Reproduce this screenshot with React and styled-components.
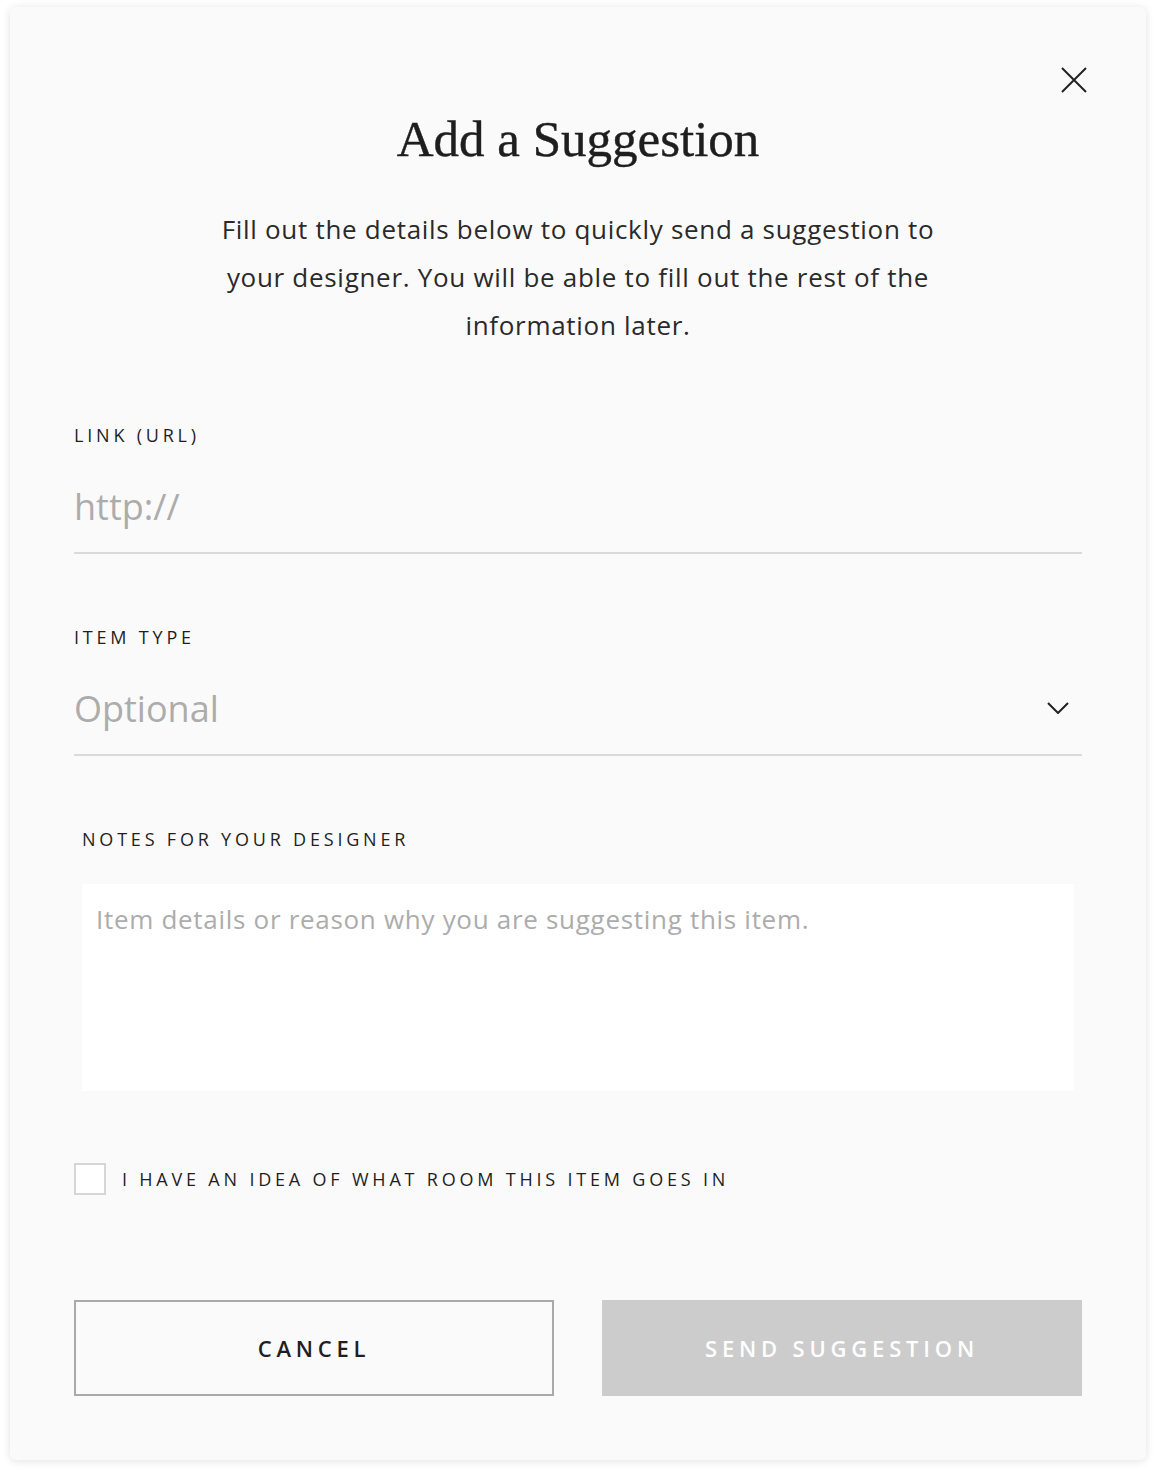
import React, { useState } from 'react';
import styled, { createGlobalStyle } from 'styled-components';

const Global = createGlobalStyle`
  html, body {
    margin: 0;
    padding: 0;
    background: #ffffff;
  }
  * { box-sizing: border-box; }
`;

const Page = styled.div`
  padding: 7px 10px 12px 10px;
`;

const Modal = styled.div`
  position: relative;
  width: 1136px;
  height: 1453px;
  background: #fafafa;
  border-radius: 6px;
  box-shadow: 0 1px 8px rgba(0, 0, 0, 0.12);
  padding: 107px 64px 0 64px;
  font-family: "Open Sans", "Noto Sans", sans-serif;
  color: #222;
`;

const Close = styled.button`
  all: unset;
  position: absolute;
  top: 53px;
  right: 52px;
  width: 40px;
  height: 40px;
  display: flex;
  align-items: center;
  justify-content: center;
  cursor: pointer;
`;

const Title = styled.h1`
  margin: 0;
  text-align: center;
  font-family: "Liberation Serif", "DejaVu Serif", serif;
  font-weight: 400;
  font-size: 51px;
  line-height: 1;
  color: #1e1e1e;
  -webkit-text-stroke: 0.4px #1e1e1e;
`;

const Intro = styled.p`
  margin: 40px auto 0 auto;
  width: 730px;
  text-align: center;
  font-size: 26px;
  letter-spacing: 0.7px;
  line-height: 48px;
  color: #2a2a2a;
`;

const Field = styled.div`
  margin-top: ${p => p.$top}px;
`;

const Label = styled.div`
  font-size: 18px;
  font-weight: 500;
  letter-spacing: 3.8px;
  text-transform: uppercase;
  color: #1f1f1f;
  padding-left: ${p => (p.$indent ? 8 : 0)}px;
`;

const LineRow = styled.div`
  display: flex;
  align-items: center;
  border-bottom: 2px solid #dadada;
  height: 94px;
  margin-top: 13px;
`;

const TextInput = styled.input`
  all: unset;
  flex: 1;
  font-family: "Open Sans", "Noto Sans", sans-serif;
  font-size: 36px;
  color: #333;
  &::placeholder { color: #acacac; }
`;

const Chevron = styled.span`
  display: flex;
  padding-right: 13px;
`;

const Notes = styled.textarea`
  display: block;
  margin: 33px 8px 0 8px;
  width: calc(100% - 16px);
  height: 207px;
  border: none;
  outline: none;
  resize: none;
  background: #ffffff;
  padding: 17px 14px;
  font-family: "Open Sans", "Noto Sans", sans-serif;
  font-size: 26px;
  letter-spacing: 0.7px;
  color: #333;
  &::placeholder { color: #acacac; }
`;

const CheckRow = styled.label`
  display: flex;
  align-items: center;
  gap: 16px;
  margin-top: 72px;
  font-size: 18px;
  font-weight: 500;
  letter-spacing: 3.8px;
  color: #1f1f1f;
  cursor: pointer;
`;

const Box = styled.span`
  width: 32px;
  height: 32px;
  border: 2px solid #d6d6d6;
  background: #fff;
  flex: none;
`;

const Actions = styled.div`
  display: grid;
  grid-template-columns: 1fr 1fr;
  gap: 48px;
  margin-top: 105px;
`;

const Btn = styled.button`
  height: 96px;
  font-family: "Open Sans", "Noto Sans", sans-serif;
  font-size: 22px;
  font-weight: 600;
  letter-spacing: 4.8px;
  text-transform: uppercase;
  border: 2px solid ${p => (p.$primary ? '#cccccc' : '#a9a9a9')};
  background: ${p => (p.$primary ? '#cccccc' : 'transparent')};
  color: ${p => (p.$primary ? '#ffffff' : '#1f1f1f')};
  cursor: pointer;
`;

export default function App() {
  const [checked, setChecked] = useState(false);
  return (
    <Page>
      <Global />
      <Modal>
        <Close aria-label="Close">
          <svg width="26" height="26" viewBox="0 0 26 26">
            <path d="M1 1 L25 25 M25 1 L1 25" stroke="#222" strokeWidth="2" fill="none" />
          </svg>
        </Close>
        <Title>Add a Suggestion</Title>
        <Intro>
          Fill out the details below to quickly send a suggestion to your designer. You will be able to fill out the rest of the information later.
        </Intro>

        <Field $top={74}>
          <Label>Link (URL)</Label>
          <LineRow>
            <TextInput placeholder="http://" />
          </LineRow>
        </Field>

        <Field $top={71}>
          <Label>Item Type</Label>
          <LineRow>
            <TextInput placeholder="Optional" />
            <Chevron>
              <svg width="22" height="12" viewBox="0 0 22 12">
                <path d="M1 1 L11 11 L21 1" stroke="#222" strokeWidth="2" fill="none" />
              </svg>
            </Chevron>
          </LineRow>
        </Field>

        <Field $top={71}>
          <Label $indent>Notes for your designer</Label>
          <Notes placeholder="Item details or reason why you are suggesting this item." />
        </Field>

        <CheckRow onClick={() => setChecked(!checked)}>
          <Box />
          I HAVE AN IDEA OF WHAT ROOM THIS ITEM GOES IN
        </CheckRow>

        <Actions>
          <Btn>Cancel</Btn>
          <Btn $primary>Send Suggestion</Btn>
        </Actions>
      </Modal>
    </Page>
  );
}
